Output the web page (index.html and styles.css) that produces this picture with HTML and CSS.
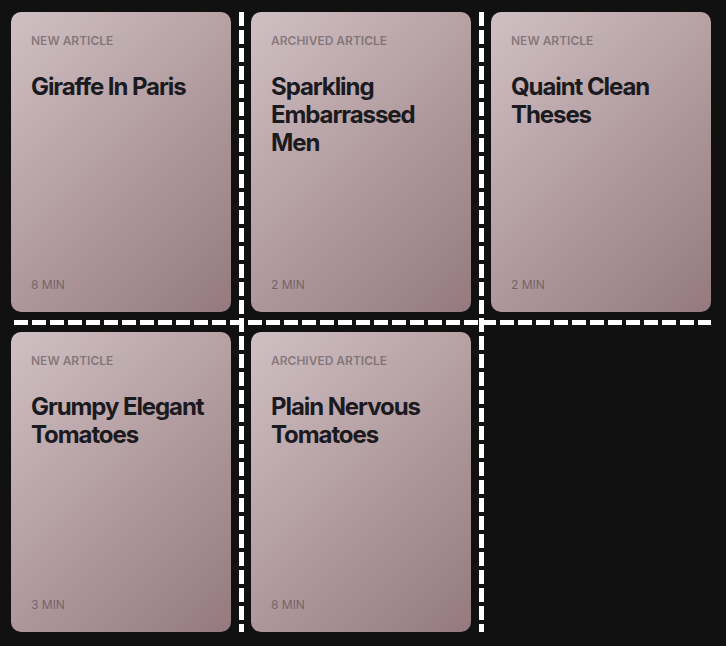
FILE: index.html
```html
<!DOCTYPE html>
<html lang="en">
<head>
<meta charset="utf-8">
<title>Articles</title>
<link rel="stylesheet" href="styles.css">
</head>
<body>
<main class="board">
  <article class="card c1">
    <p class="kind">NEW ARTICLE</p>
    <h2 class="title">Giraffe In Paris</h2>
    <p class="time">8 MIN</p>
  </article>
  <article class="card c2">
    <p class="kind">ARCHIVED ARTICLE</p>
    <h2 class="title">Sparkling Embarrassed Men</h2>
    <p class="time">2 MIN</p>
  </article>
  <article class="card c3">
    <p class="kind">NEW ARTICLE</p>
    <h2 class="title">Quaint Clean Theses</h2>
    <p class="time">2 MIN</p>
  </article>
  <article class="card c4">
    <p class="kind">NEW ARTICLE</p>
    <h2 class="title">Grumpy Elegant Tomatoes</h2>
    <p class="time">3 MIN</p>
  </article>
  <article class="card c5">
    <p class="kind">ARCHIVED ARTICLE</p>
    <h2 class="title">Plain Nervous Tomatoes</h2>
    <p class="time">8 MIN</p>
  </article>
  <div class="rule-v rv1"></div>
  <div class="rule-v rv2"></div>
  <div class="rule-h"></div>
</main>
</body>
</html>
```

FILE: styles.css
```css
html, body {
  margin: 0;
  padding: 0;
  background: #111111;
}

.board {
  display: grid;
  grid-template-columns: 220px 20px 220px 20px 220px;
  grid-template-rows: 300px 20px 300px;
  padding: 12px 0 0 11px;
  font-family: Inter, "Noto Sans", sans-serif;
}

.card {
  display: flex;
  flex-direction: column;
  padding: 21px 20px 19px;
  border-radius: 10px;
  background: linear-gradient(135deg, #d0c0c3 0%, #b29ca0 50%, #947a7f 100%);
  box-sizing: border-box;
  z-index: 1;
}

.c1 { grid-column: 1; grid-row: 1; }
.c2 { grid-column: 3; grid-row: 1; }
.c3 { grid-column: 5; grid-row: 1; }
.c4 { grid-column: 1; grid-row: 3; }
.c5 { grid-column: 3; grid-row: 3; }

.kind {
  margin: 0;
  font-size: 12px;
  line-height: 16px;
  font-weight: 600;
  letter-spacing: 0;
  color: rgba(75, 66, 70, 0.55);
}

.title {
  margin: 24px 0 0;
  font-size: 24px;
  line-height: 28px;
  font-weight: 700;
  letter-spacing: -0.045em;
  color: #1b1a1f;
}

.time {
  margin: auto 0 0;
  font-size: 12px;
  line-height: 16px;
  font-weight: 400;
  color: rgba(75, 66, 70, 0.6);
}

.rule-v {
  grid-row: 1 / 4;
  width: 5px;
  justify-self: center;
  background: repeating-linear-gradient(to bottom, #ffffff 0 14px, transparent 14px 18px);
  margin-bottom: -1px;
}
.rv1 { grid-column: 2; }
.rv2 { grid-column: 4; }

.rule-h {
  grid-row: 2;
  grid-column: 1 / 6;
  height: 5px;
  align-self: center;
  margin: 0 0 0 3px;
  background: repeating-linear-gradient(to right, #ffffff 0 14px, transparent 14px 18px);
}
```
